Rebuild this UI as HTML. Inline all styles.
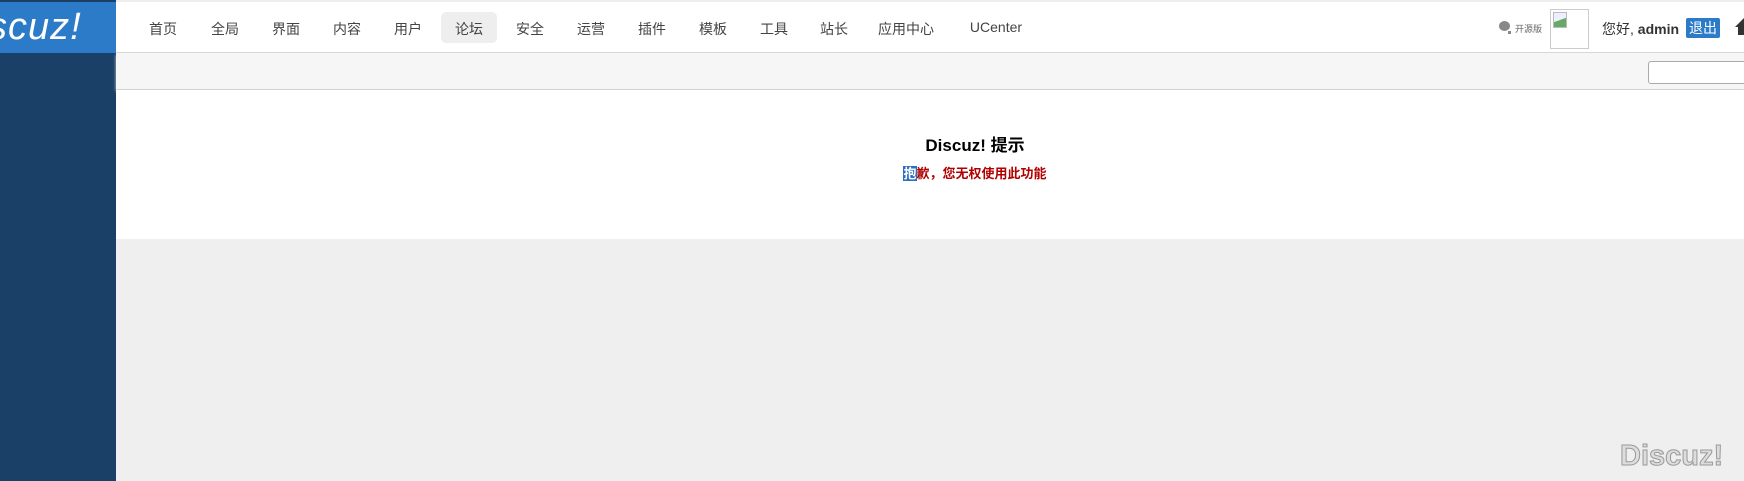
<!DOCTYPE html>
<html><head><meta charset="utf-8"><style>
*{margin:0;padding:0;box-sizing:border-box}
body{width:1744px;height:481px;overflow:hidden;background:#efefef;font-family:"Liberation Sans","Noto Sans CJK SC",sans-serif;position:relative}
.side{position:absolute;left:0;top:0;width:116px;height:481px;background:#1b4068}
.logo{position:absolute;left:0;top:2px;width:116px;height:51px;background:#2c7bc9;color:#fff;font-size:38px;font-style:italic;line-height:50px;overflow:hidden;letter-spacing:1px}
.logo span{position:absolute;left:-12px}
.hdr{position:absolute;left:116px;top:0;right:0;height:53px;background:#fff;border-top:2px solid #eee;border-bottom:1px solid #d8d8d8}
.nav a{position:absolute;top:19px;font-size:14px;color:#444;text-decoration:none;transform:translateX(-50%);white-space:nowrap}
.act{position:absolute;left:441px;top:12px;width:56px;height:31px;background:#eee;border-radius:5px}
.sub{position:absolute;left:116px;top:53px;right:0;height:36px;background:#f6f6f6;box-shadow:0 2px 3px #ccc}
.srch{position:absolute;left:1648px;top:61px;width:110px;height:23px;border:1px solid #aaa;border-radius:3px;background:#fff}
.main{position:absolute;left:116px;top:90px;right:0;height:149px;background:#fff}
.t{position:absolute;left:775px;width:400px;text-align:center}
</style></head><body>
<div class="hdr"></div>
<div class="side"></div>
<div class="logo"><span>scuz!</span></div>
<div class="nav">
<div class="act"></div>
<a style="left:163px">首页</a><a style="left:225px">全局</a><a style="left:286px">界面</a><a style="left:347px">内容</a><a style="left:408px">用户</a><a style="left:469px">论坛</a><a style="left:530px">安全</a><a style="left:591px">运营</a><a style="left:652px">插件</a><a style="left:713px">模板</a><a style="left:774px">工具</a><a style="left:834px">站长</a><a style="left:906px">应用中心</a><a style="left:996px">UCenter</a>
</div>
<div style="position:absolute;left:1499px;top:21px;width:11px;height:10px;background:#888;border-radius:50%"></div>
<div style="position:absolute;left:1508px;top:31px;width:3px;height:3px;background:#888"></div>
<div style="position:absolute;left:1515px;top:22px;font-size:9px;color:#666">开源版</div>
<div style="position:absolute;left:1550px;top:9px;width:39px;height:40px;border:1px solid #ccc;background:#fff"></div>
<div style="position:absolute;left:1553px;top:12px;width:14px;height:16px;border:1px solid #bbb;background:linear-gradient(160deg,#eef 50%,#6a6 50%)"></div>
<div style="position:absolute;left:1602px;top:19px;font-size:14px;color:#333">您好, <b>admin</b></div>
<div style="position:absolute;left:1686px;top:18px;width:34px;height:20px;background:#2c7bc9;color:#fff;font-size:14px;line-height:20px;text-align:center;border-radius:2px">退出</div>
<div style="position:absolute;left:1735px;top:18px;width:0;height:0;border-left:9px solid transparent;border-right:9px solid transparent;border-bottom:9px solid #333"></div>
<div style="position:absolute;left:1738px;top:26px;width:12px;height:9px;background:#333"></div>
<div class="sub"></div>
<div class="srch"></div>
<div class="main"></div>
<div class="t" style="top:131px;font-size:17px;font-weight:bold;color:#000">Discuz! 提示</div>
<div class="t" style="top:163px;font-size:13px;font-weight:bold;color:#b00000"><span style="background:#2c6fc0;color:#fff">抱</span>歉，您无权使用此功能</div>
<div style="position:absolute;left:1620px;top:440px;font-size:29px;font-weight:bold;color:#ddd;-webkit-text-stroke:1px #999">Discuz!</div>
</body></html>
